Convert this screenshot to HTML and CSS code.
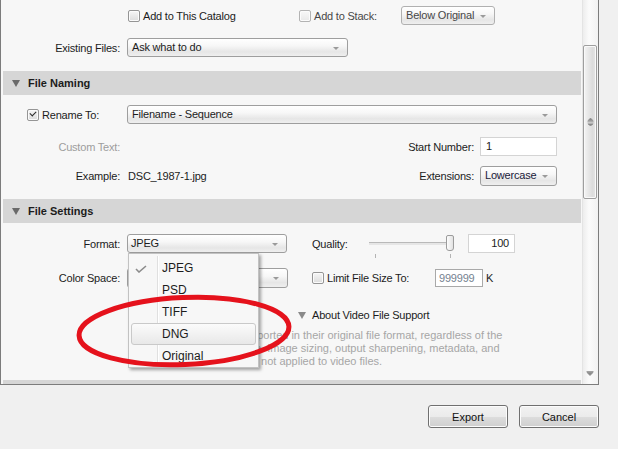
FILE: index.html
```html
<!DOCTYPE html>
<html lang="en">
<head>
    <meta charset="UTF-8">
    <title>Export</title>
    <link rel="stylesheet" href="styles.css">
</head>
<body>
    <div class="panel">
        <div class="content">
            <div class="row r-catalog">
                <span class="lbl"></span>
                <label class="check c-catalog"><span class="box"></span>Add to This Catalog</label>
                <label class="check c-stack dim"><span class="box"></span>Add to Stack:</label>
                <div class="select s-stack dim">Below Original</div>
            </div>
            <div class="row r-existing">
                <span class="lbl">Existing Files:</span>
                <div class="select s-existing">Ask what to do</div>
            </div>

            <div class="section-head h-naming"><span class="tri"></span>File Naming</div>

            <div class="row r-rename">
                <label class="check c-rename"><span class="box checked"></span>Rename To:</label>
                <div class="select s-rename">Filename - Sequence</div>
            </div>
            <div class="row r-custom">
                <span class="lbl disabled">Custom Text:</span>
                <div class="right-group">
                    <span class="rlbl">Start Number:</span>
                    <div class="input i-start">1</div>
                </div>
            </div>
            <div class="row r-example">
                <span class="lbl">Example:</span>
                <span class="value">DSC_1987-1.jpg</span>
                <div class="right-group">
                    <span class="rlbl">Extensions:</span>
                    <div class="select s-ext">Lowercase</div>
                </div>
            </div>

            <div class="section-head h-settings"><span class="tri"></span>File Settings</div>

            <div class="row r-format">
                <span class="lbl">Format:</span>
                <div class="select s-format">JPEG</div>
                <span class="quality-lbl">Quality:</span>
                <div class="slider">
                    <span class="track"></span>
                    <span class="tick t1"></span>
                    <span class="tick t2"></span>
                    <span class="thumb"></span>
                </div>
                <div class="input i-quality">100</div>
            </div>
            <div class="row r-color">
                <span class="lbl">Color Space:</span>
                <div class="select s-color"></div>
                <label class="check c-limit"><span class="box"></span>Limit File Size To:</label>
                <div class="input i-limit">999999</div>
                <span class="unit">K</span>
            </div>
            <div class="about">
                <span class="tri"></span>About Video File Support
            </div>
            <p class="desc">Video files are exported in their original file format, regardless of the<br>file settings above. Image sizing, output sharpening, metadata, and<br>watermarking are not applied to video files.</p>

            <!-- top edge of the next section, scrolled out of view -->
            <div class="section-head h-next"></div>

            <!-- open format popup -->
            <div class="menu">
                <div class="menu-item"><svg class="tick-mark" width="12" height="8" viewBox="0 0 12 8"><polyline points="1,4 4,7 11,1" fill="none" stroke="#8c8c8c" stroke-width="1.6"/></svg>JPEG</div>
                <div class="menu-item">PSD</div>
                <div class="menu-item">TIFF</div>
                <div class="menu-item hover">DNG</div>
                <div class="menu-item">Original</div>
            </div>

            <svg class="mark" width="240" height="90" viewBox="0 0 240 90">
                <ellipse cx="115" cy="42" rx="105" ry="33.5" transform="rotate(-2.5 115 42)" fill="none" stroke="#e5121c" stroke-width="5"/>
            </svg>
        </div>
        <div class="scrollbar">
            <div class="sb-thumb">
                <svg width="7" height="8" viewBox="0 0 7 8"><path d="M3.5 0 L6 2.5 H1 Z M0.5 3.5 H6.5 M0.5 5 H6.5 M1 6 H6 L3.5 8 Z" fill="#8a8a8a" stroke="#8a8a8a" stroke-width="0.6"/></svg>
            </div>
            <svg class="sb-down" width="8" height="5" viewBox="0 0 8 5"><path d="M0.5 0.5 H7.5 M1 1.5 H7 L4 4.5 Z" fill="#8a8a8a" stroke="#8a8a8a" stroke-width="0.8"/></svg>
        </div>
    </div>

    <div class="footer">
        <button class="btn">Export</button>
        <button class="btn">Cancel</button>
    </div>
</body>
</html>
```

FILE: styles.css
```css
body {
    margin: 0;
    background-color: #f0f0f0;
    font-family: "Liberation Sans", Arial, sans-serif;
    font-size: 11px;
    letter-spacing: -0.2px;
    color: #1c1c1c;
}
.panel {
    display: flex;
    width: 597px;
    height: 384px;
    border: 1px solid #7c7c7c;
    border-top: none;
}
.content {
    position: relative;
    width: 579px;
    padding-left: 2px;
    background-color: #f7f7f7;
    overflow: hidden;
}
.row {
    display: flex;
    align-items: center;
    height: 19px;
    margin-right: 25px;
}
.lbl {
    width: 117px;
    margin-right: 7px;
    text-align: right;
    flex-shrink: 0;
}
.lbl.disabled {
    color: #9d9d9d;
}
.dim {
    color: #474747;
}
.check {
    display: flex;
    align-items: center;
    flex-shrink: 0;
}
.box {
    width: 10px;
    height: 10px;
    margin-right: 3px;
    border: 1px solid #959595;
    border-radius: 2px;
    background: linear-gradient(#f6f6f6, #dcdcdc);
    box-shadow: inset 0 0 0 1px #fbfbfb;
    position: relative;
}
.box.checked::after {
    content: "";
    position: absolute;
    left: 2px;
    top: 1px;
    width: 5px;
    height: 3px;
    border-left: 1.5px solid #2a2a2a;
    border-bottom: 1.5px solid #2a2a2a;
    transform: rotate(-45deg);
}
.select {
    position: relative;
    box-sizing: border-box;
    height: 19px;
    line-height: 17px;
    padding-left: 4px;
    border: 1px solid #9e9e9e;
    border-radius: 3px;
    background: linear-gradient(#ffffff 0%, #f7f7f7 40%, #e6e6e6 75%, #efefef 100%);
    flex-shrink: 0;
}
.select::after {
    content: "";
    position: absolute;
    right: 8px;
    top: 8px;
    border-left: 3px solid transparent;
    border-right: 3px solid transparent;
    border-top: 3px solid #9a9a9a;
}
.input {
    box-sizing: border-box;
    height: 19px;
    line-height: 17px;
    padding: 0 5px;
    border: 1px solid #d4d4d4;
    background-color: #ffffff;
    flex-shrink: 0;
}
.right-group {
    display: flex;
    align-items: center;
    margin-left: auto;
}
.rlbl {
    margin-right: 6px;
}

/* rows, top to bottom */
.r-catalog {
    margin-top: 6px;
}
.c-catalog {
    width: 171px;
    margin-left: 1px;
}
.c-stack {
    width: 102px;
}
.c-stack .box {
    border-color: #b3b3b3;
    background: linear-gradient(#f8f8f8, #e8e8e8);
}
.s-stack {
    width: 94px;
    border-color: #b0b0b0;
}
.r-existing {
    margin-top: 13px;
}
.s-existing {
    width: 221px;
}
.section-head {
    display: flex;
    align-items: center;
    height: 24px;
    margin-right: 1px;
    padding-left: 9px;
    background-color: #d6d6d6;
    font-weight: bold;
    letter-spacing: 0;
}
.tri {
    width: 0;
    height: 0;
    margin-right: 8px;
    border-left: 4px solid transparent;
    border-right: 4px solid transparent;
    border-top: 7px solid #6a6a6a;
}
.h-naming {
    margin-top: 14px;
}
.r-rename {
    margin-top: 10px;
}
.c-rename {
    width: 100px;
    margin-left: 24px;
}
.s-rename {
    flex: 1;
}
.r-custom {
    margin-top: 13px;
}
.i-start {
    width: 77px;
}
.r-example {
    margin-top: 10px;
    height: 20px;
}
.value {
    margin-left: 1px;
}
.s-ext {
    width: 77px;
    height: 20px;
    color: #1a1a3a;
}
.h-settings {
    margin-top: 13px;
}
.r-format {
    margin-top: 11px;
}
.s-format {
    width: 160px;
    padding-left: 3px;
}
.quality-lbl {
    width: 57px;
    margin-left: 25px;
    flex-shrink: 0;
}
.slider {
    position: relative;
    width: 86px;
    height: 19px;
    flex-shrink: 0;
}
.track {
    position: absolute;
    left: 0;
    right: 2px;
    top: 8px;
    height: 2px;
    border-top: 1px solid #b9b9b9;
    background-color: #e6e6e6;
}
.tick {
    position: absolute;
    top: 20px;
    width: 1px;
    height: 4px;
    background-color: #b4b4b4;
}
.t1 {
    left: 6px;
}
.t2 {
    left: 81px;
}
.thumb {
    position: absolute;
    left: 77px;
    top: 1px;
    width: 6px;
    height: 14px;
    border: 1px solid #9c9c9c;
    border-radius: 2px 2px 3px 3px;
    background: linear-gradient(to right, #fdfdfd, #e2e2e2);
}
.i-quality {
    width: 47px;
    margin-left: 13px;
    text-align: right;
}
.r-color {
    margin-top: 15px;
    height: 20px;
}
.s-color {
    width: 161px;
    height: 20px;
}
.c-limit {
    width: 123px;
    margin-left: 24px;
}
.i-limit {
    width: 48px;
    height: 18px;
    padding: 0 3px;
    border-color: #a9a9a9;
    color: #758290;
}
.unit {
    margin-left: 3px;
}
.about {
    display: flex;
    align-items: center;
    height: 14px;
    margin-top: 20px;
    margin-left: 295px;
}
.about .tri {
    margin-right: 6px;
    border-top-color: #8a8a8a;
}
.desc {
    margin: 7px 0 0 170px;
    line-height: 13px;
    letter-spacing: 0;
    color: #a6a6a6;
    white-space: nowrap;
}
.h-next {
    height: 4px;
    margin-top: 12px;
}

/* format popup */
.menu {
    position: absolute;
    left: 127px;
    top: 253px;
    box-sizing: border-box;
    width: 131px;
    height: 115px;
    padding-top: 3px;
    border: 1px solid #c2c2c2;
    background-color: #f7f7f7;
    box-shadow: 2px 2px 3px rgba(0, 0, 0, 0.35);
    font-size: 12px;
    letter-spacing: 0;
}
.menu::before {
    content: "";
    position: absolute;
    left: 28px;
    top: 2px;
    bottom: 2px;
    width: 1px;
    background-color: #e0e0e0;
    box-shadow: 1px 0 0 #ffffff;
}
.menu-item {
    position: relative;
    box-sizing: border-box;
    height: 22px;
    line-height: 22px;
    margin: 0 2px;
    padding-left: 31px;
}
.menu-item.hover {
    line-height: 20px;
    padding-left: 30px;
    border: 1px solid #c9c9c9;
    border-radius: 3px;
    background: linear-gradient(#fbfbfb, #e8e8e8);
}
.tick-mark {
    position: absolute;
    left: 4px;
    top: 8px;
}
.mark {
    position: absolute;
    left: 68px;
    top: 289px;
}

/* scrollbar */
.scrollbar {
    position: relative;
    width: 16px;
    border-left: 1px solid #e4e4e4;
    box-sizing: border-box;
    background: linear-gradient(to right, #ededed, #fbfbfb 40%, #f2f2f2);
}
.sb-thumb {
    display: flex;
    align-items: center;
    justify-content: center;
    box-sizing: border-box;
    width: 14px;
    height: 154px;
    margin-top: 45px;
    border: 1px solid #9e9e9e;
    border-radius: 2px;
    background: linear-gradient(to right, #f4f4f4, #dcdcdc 70%, #e6e6e6);
    box-shadow: inset 0 0 0 1px #f9f9f9;
}
.sb-down {
    position: absolute;
    left: 3px;
    bottom: 8px;
}

/* dialog buttons */
.footer {
    display: flex;
    justify-content: flex-end;
    gap: 11px;
    width: 599px;
    margin-top: 20px;
}
.btn {
    width: 80px;
    height: 23px;
    padding: 0;
    border: 1px solid #707070;
    border-radius: 3px;
    background: linear-gradient(#f2f2f2 0%, #ebebeb 50%, #dddddd 51%, #cfcfcf 100%);
    box-shadow: inset 0 0 0 1px #fcfcfc;
    font-family: "Liberation Sans", Arial, sans-serif;
    font-size: 11px;
    color: #111111;
}
```
